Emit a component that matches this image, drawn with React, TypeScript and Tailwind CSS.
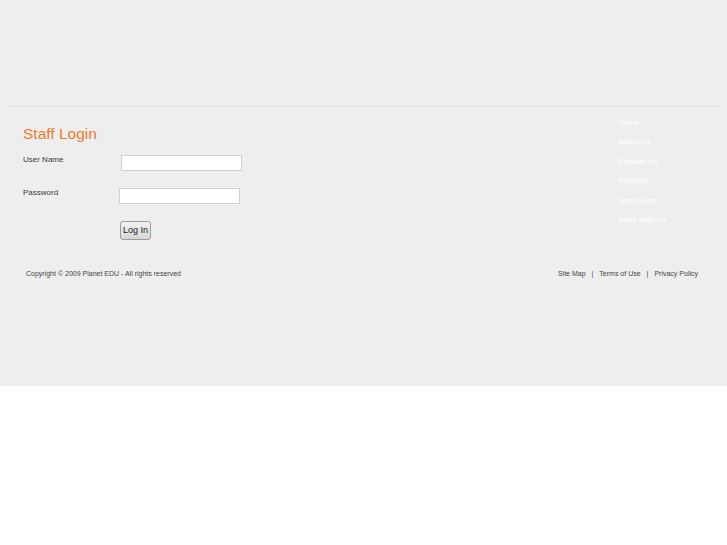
const navItems = ["Home", "About Us", "Contact Us", "Services", "Staff Login", "Work With Us"];

export default function App() {
  return (
    <div className="w-full bg-white font-['Liberation_Sans',Arial,sans-serif]">
      <div className="h-[386px] bg-[#eeeeee]">
        {/* header space */}
        <div className="h-[106px]" />
        <div className="ml-[8px] w-[712px] h-px bg-[#e4ddd6]" />
        <div className="ml-[8px] w-[712px] h-px bg-[#f3f1ef]" />

        <div className="flex">
          {/* Login form */}
          <div className="flex-1 pl-[23px]">
            <h1 className="mt-[16px] text-[15.5px] leading-[20px] text-[#f07a2e]">Staff Login</h1>

            <div className="mt-[11px] flex items-start">
              <label className="w-[98px] text-[8px] leading-[10px] text-[#3a3a3a]">User Name</label>
              <input type="text" className="w-[121px] h-[16px] bg-white border border-[#d3d0cc] outline-none" />
            </div>

            <div className="mt-[17px] flex items-start">
              <label className="w-[96px] text-[8px] leading-[10px] text-[#3a3a3a]">Password</label>
              <input type="password" className="w-[121px] h-[16px] bg-white border border-[#d3d0cc] outline-none" />
            </div>

            <div className="mt-[17px] flex pl-[97px]">
              <button className="w-[31px] h-[19px] rounded-[3px] border border-[#9c9c9c] bg-gradient-to-b from-[#f2f2f2] to-[#d6d6d6] text-[9px] leading-[17px] text-[#222]">
                Log In
              </button>
            </div>
          </div>

          {/* Side navigation */}
          <nav className="w-[109px] pt-[5px]">
            {navItems.map((item) => (
              <a key={item} href="#" className="block text-[8px] leading-[19.4px] text-white">
                {item}
              </a>
            ))}
          </nav>
        </div>

        {/* Footer */}
        <div className="mt-[29px] flex justify-between pl-[26px] pr-[29px] text-[7px] leading-[9px] text-[#444]">
          <p>Copyright © 2009 Planet EDU - All rights reserved</p>
          <p>
            <a href="#">Site Map</a>
            <span className="mx-[6px]">|</span>
            <a href="#">Terms of Use</a>
            <span className="mx-[6px]">|</span>
            <a href="#">Privacy Policy</a>
          </p>
        </div>
      </div>
      <div className="h-[159px]" />
    </div>
  );
}
